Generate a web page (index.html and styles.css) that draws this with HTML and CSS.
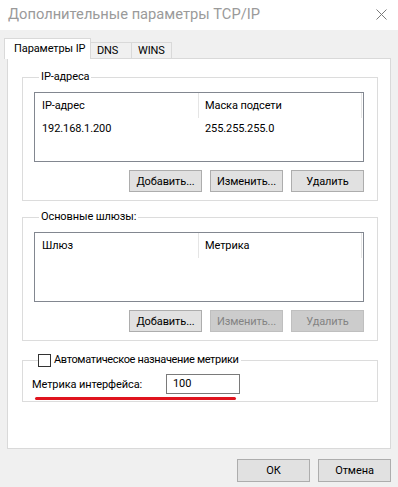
FILE: index.html
```html
<!DOCTYPE html>
<html lang="ru">
<head>
  <meta charset="UTF-8">
  <title>Дополнительные параметры TCP/IP</title>
  <link rel="stylesheet" href="styles.css">
</head>
<body>
  <div class="titlebar">
    <span class="title">Дополнительные параметры TCP/IP</span>
    <svg class="close" width="11" height="11" viewBox="0 0 11 11">
      <path d="M0.5 0.5 L10.5 10.5 M10.5 0.5 L0.5 10.5" stroke="#7a7a7a" stroke-width="1" fill="none"/>
    </svg>
  </div>

  <div class="dialog">
    <div class="tabs">
      <div class="tab active">Параметры IP</div>
      <div class="tab tab-dns">DNS</div>
      <div class="tab tab-wins">WINS</div>
    </div>

    <div class="panel">
      <!-- IP addresses -->
      <fieldset class="group">
        <legend>IP-адреса</legend>
        <div class="list">
          <div class="list-head">
            <div class="col col-1">IP-адрес</div>
            <div class="col col-2">Маска подсети</div>
          </div>
          <div class="list-row">
            <div class="col col-1">192.168.1.200</div>
            <div class="col col-2">255.255.255.0</div>
          </div>
        </div>
        <div class="btn-row">
          <button class="btn">Добавить...</button>
          <button class="btn">Изменить...</button>
          <button class="btn">Удалить</button>
        </div>
      </fieldset>

      <!-- Gateways -->
      <fieldset class="group group-gw">
        <legend>Основные шлюзы:</legend>
        <div class="list">
          <div class="list-head">
            <div class="col col-1">Шлюз</div>
            <div class="col col-2">Метрика</div>
          </div>
        </div>
        <div class="btn-row">
          <button class="btn">Добавить...</button>
          <button class="btn" disabled>Изменить...</button>
          <button class="btn" disabled>Удалить</button>
        </div>
      </fieldset>

      <!-- Metric -->
      <fieldset class="group group-metric">
        <legend class="check-legend">
          <span class="checkbox"></span>
          <span class="check-text">Автоматическое назначение метрики</span>
        </legend>
        <div class="metric-row">
          <span class="metric-label">Метрика интерфейса:</span>
          <span class="metric-input">100</span>
        </div>
        <div class="red-line"></div>
      </fieldset>
    </div>

    <div class="footer">
      <button class="btn btn-lg">ОК</button>
      <button class="btn btn-lg">Отмена</button>
    </div>
  </div>
</body>
</html>
```

FILE: styles.css
```css
/* General */
body {
  margin: 0;
  width: 398px;
  height: 487px;
  overflow: hidden;
  background: #f0f0f0;
  font-family: 'Roboto', 'Segoe UI', sans-serif;
  font-size: 11px;
  letter-spacing: -0.1px;
  color: #000;
}

/* Title bar */
.titlebar {
  height: 30px;
  background: #fff;
  display: flex;
  align-items: center;
  justify-content: space-between;
  padding: 0 11px 0 8px;
}

.title {
  font-size: 14.7px;
  letter-spacing: 0;
  color: #9a9a9a;
  margin-top: -2px;
  white-space: nowrap;
}

.close {
  margin-top: -1px;
}

/* Dialog */
.dialog {
  padding: 8px 7px 0 7px;
}

/* Tabs */
.tabs {
  display: flex;
  align-items: flex-end;
  height: 20px;
  margin-left: -3px;
}

.tab {
  height: 16px;
  line-height: 16px;
  border: 1px solid #d9d9d9;
  border-bottom: none;
  background: #f0f0f0;
  padding: 0 8px;
  box-sizing: border-box;
  white-space: nowrap;
}

.tab.active {
  position: relative;
  z-index: 1;
  height: 21px;
  line-height: 20px;
  margin-bottom: -1px;
  background: #fff;
  width: 87px;
  padding-left: 9px;
}

.tab-dns {
  width: 41px;
  border-left: none;
  padding-left: 6px;
}

.tab-wins {
  width: 40px;
  border-left: none;
  padding-left: 6px;
}

/* Panel */
.panel {
  height: 391px;
  box-sizing: border-box;
  border: 1px solid #d9d9d9;
  background: #fff;
  padding: 10px 12px 0 14px;
}

/* Group boxes */
.group {
  margin: 0;
  border: 1px solid #dcdcdc;
  padding: 7px 13px 8px 11px;
  min-width: 0;
}

.group legend {
  line-height: 16px;
  padding: 0 2px;
  margin-left: 5px;
  white-space: nowrap;
}

.group-gw {
  margin-top: 8px;
}

/* List view */
.list {
  height: 70px;
  box-sizing: border-box;
  border: 1px solid #828790;
}

.list-head,
.list-row {
  display: flex;
}

.list-head {
  height: 25px;
  line-height: 25px;
}

.list-row {
  height: 21px;
  line-height: 21px;
}

.col {
  box-sizing: border-box;
  padding-left: 7px;
  white-space: nowrap;
}

.col-1 {
  width: 164px;
}

.col-2 {
  width: 163px;
  padding-left: 6px;
}

.list-head .col {
  border-right: 1px solid #e5e5e5;
}

/* Buttons */
.btn-row {
  display: flex;
  justify-content: flex-end;
  gap: 8px;
  margin-top: 8px;
}

.btn {
  width: 73px;
  height: 22px;
  padding: 0;
  font: inherit;
  letter-spacing: inherit;
  color: #000;
  background: #e1e1e1;
  border: 1px solid #adadad;
  border-radius: 0;
  white-space: nowrap;
}

.btn:disabled {
  color: #838383;
  background: #cccccc;
  border-color: #bfbfbf;
}

/* Metric group */
.group-metric {
  margin-top: 11px;
  padding: 6px 10px 1px 9px;
}

.group .check-legend {
  display: flex;
  align-items: center;
  margin-left: 6px;
  padding: 0 3px 0 0;
}

.check-text {
  letter-spacing: -0.35px;
}

.checkbox {
  width: 13px;
  height: 13px;
  box-sizing: border-box;
  border: 1px solid #333;
  background: #fff;
  margin-right: 3px;
}

.metric-row {
  display: flex;
  align-items: center;
}

.metric-label {
  width: 134px;
  white-space: nowrap;
}

.metric-input {
  width: 74px;
  height: 20px;
  line-height: 18px;
  box-sizing: border-box;
  border: 1px solid #7a7a7a;
  padding-left: 6px;
}

.red-line {
  width: 201px;
  height: 3px;
  margin: 3px 0 0 3px;
  background: #e0141e;
  border-radius: 2px;
}

/* Footer */
.footer {
  display: flex;
  justify-content: flex-end;
  gap: 8px;
  margin-top: 10px;
}

.btn-lg {
  height: 23px;
}
```
